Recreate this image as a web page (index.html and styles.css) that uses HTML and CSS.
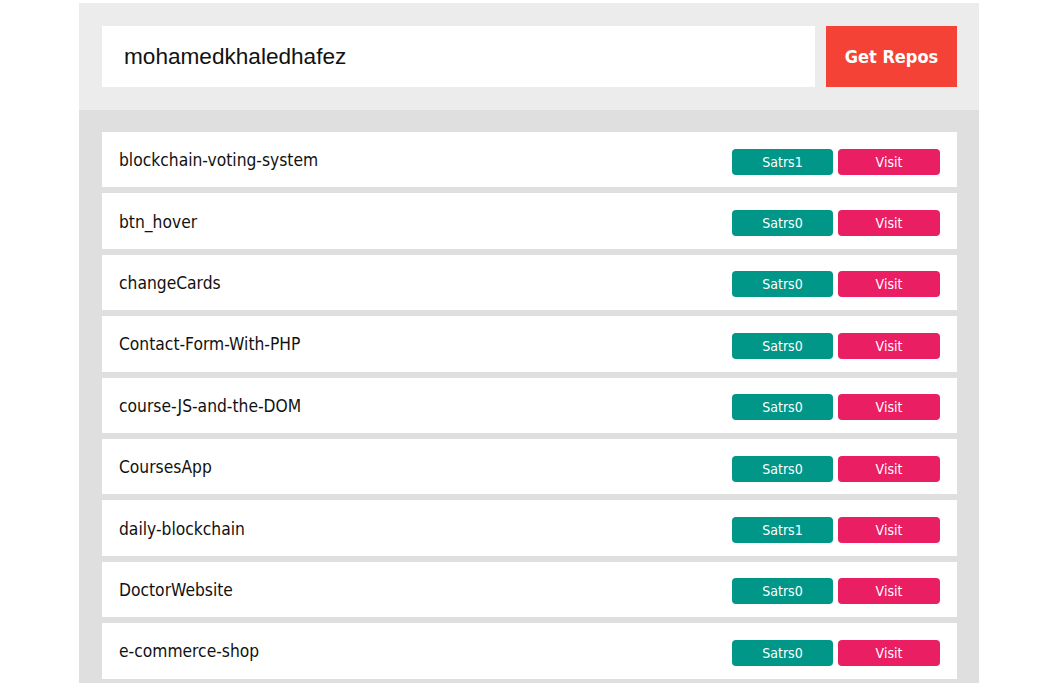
FILE: index.html
```html
<!DOCTYPE html>
<html>
<head>
<meta charset="utf-8">
<link rel="stylesheet" href="styles.css">
</head>
<body>
<div class="container">
  <div class="search">
    <div class="input">mohamedkhaledhafez</div>
    <div class="get-btn">Get Repos</div>
  </div>
  <div class="repos">
    <div class="repo"><span class="name">blockchain-voting-system</span><div class="actions"><span class="stars">Satrs1</span><span class="visit">Visit</span></div></div>
    <div class="repo"><span class="name">btn_hover</span><div class="actions"><span class="stars">Satrs0</span><span class="visit">Visit</span></div></div>
    <div class="repo"><span class="name">changeCards</span><div class="actions"><span class="stars">Satrs0</span><span class="visit">Visit</span></div></div>
    <div class="repo"><span class="name">Contact-Form-With-PHP</span><div class="actions"><span class="stars">Satrs0</span><span class="visit">Visit</span></div></div>
    <div class="repo"><span class="name">course-JS-and-the-DOM</span><div class="actions"><span class="stars">Satrs0</span><span class="visit">Visit</span></div></div>
    <div class="repo"><span class="name">CoursesApp</span><div class="actions"><span class="stars">Satrs0</span><span class="visit">Visit</span></div></div>
    <div class="repo"><span class="name">daily-blockchain</span><div class="actions"><span class="stars">Satrs1</span><span class="visit">Visit</span></div></div>
    <div class="repo"><span class="name">DoctorWebsite</span><div class="actions"><span class="stars">Satrs0</span><span class="visit">Visit</span></div></div>
    <div class="repo"><span class="name">e-commerce-shop</span><div class="actions"><span class="stars">Satrs0</span><span class="visit">Visit</span></div></div>
  </div>
</div>
</body>
</html>
```

FILE: styles.css
```css
html, body {
  margin: 0;
  padding: 0;
  background: #ffffff;
}
body {
  font-family: "DejaVu Sans Condensed", "DejaVu Sans", Tahoma, sans-serif;
  font-stretch: condensed;
  padding: 3px 0 0 4px;
}
.container {
  width: 900px;
  margin: 0 auto;
}
.search {
  background: #ececec;
  padding: 23px 22px 23px 23px;
  display: flex;
  gap: 11px;
}
.input {
  flex: 1;
  height: 61px;
  background: #ffffff;
  display: flex;
  align-items: center;
  padding-left: 22px;
  font-family: "Liberation Sans", Arial, sans-serif;
  font-stretch: normal;
  font-size: 22.6px;
  color: #111;
}
.get-btn {
  width: 131px;
  height: 61px;
  background: #f44336;
  color: #fff;
  font-weight: bold;
  font-size: 18px;
  display: flex;
  align-items: center;
  justify-content: center;
}
.repos {
  background: #dfdfdf;
  padding: 22px 22px 10px 23px;
}
.repo {
  background: #fff;
  height: 55.4px;
  margin-bottom: 6px;
  display: flex;
  align-items: center;
  justify-content: space-between;
  padding: 0 17px;
  box-sizing: border-box;
}
.name {
  font-size: 17.3px;
  color: #111;
  padding-top: 1px;
}
.actions {
  display: flex;
  gap: 5px;
  margin-top: 4px;
}
.stars, .visit {
  width: 101px;
  height: 26px;
  border-radius: 4px;
  color: #fff;
  font-size: 14px;
  display: flex;
  align-items: center;
  justify-content: center;
}
.stars { background: #009688; }
.visit { background: #e91e63; width: 102px; }
```
